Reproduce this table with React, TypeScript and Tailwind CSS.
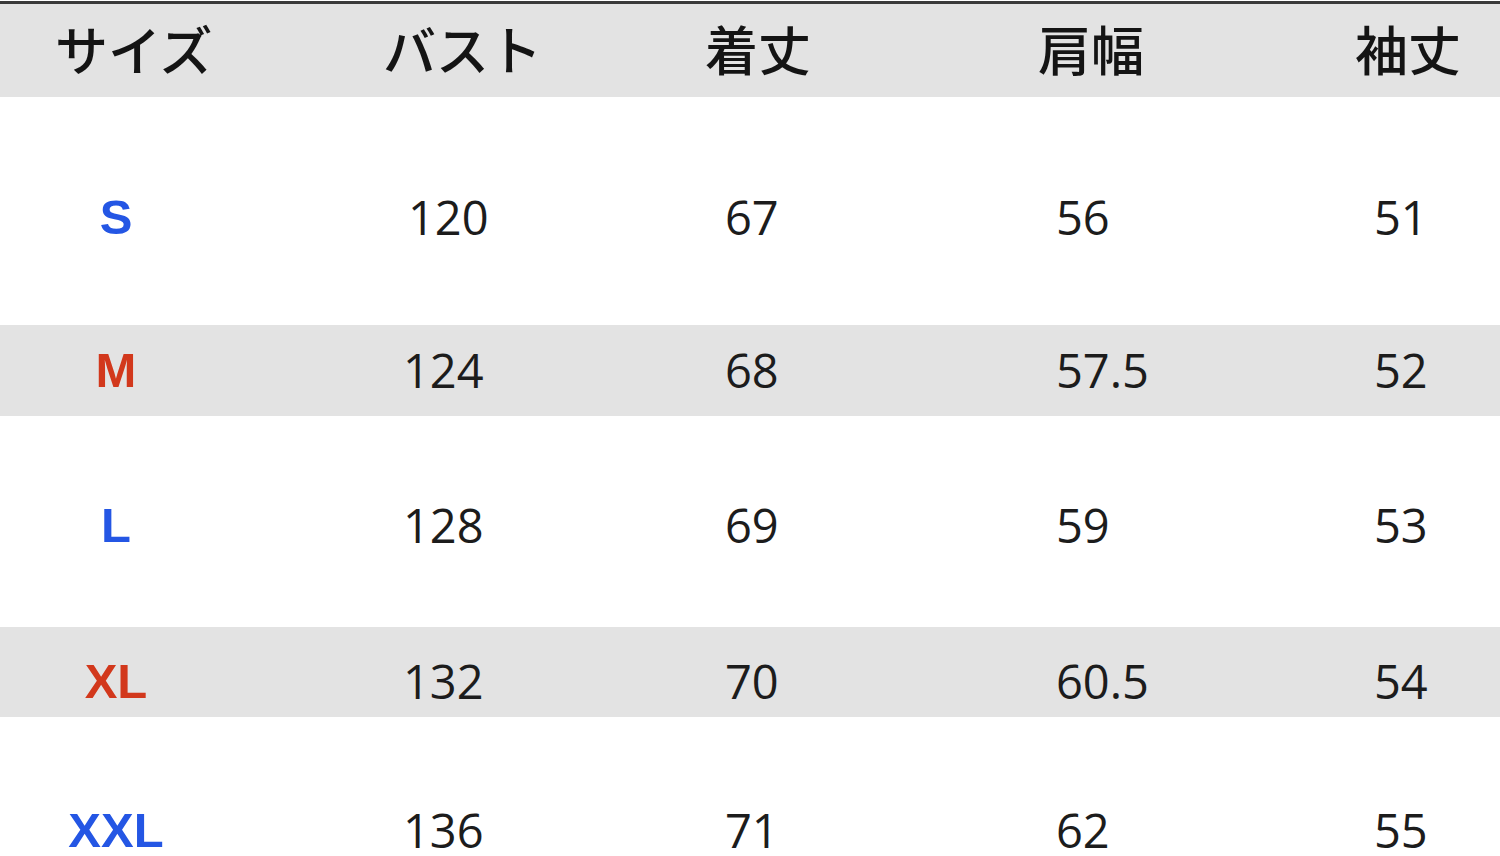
const HEADERS = ["サイズ", "バスト", "着丈", "肩幅", "袖丈"];

type Row = {
  size: string;
  color: string;
  values: string[];
  band: string;
};

const ROWS: Row[] = [
  { size: "S", color: "text-[#2456e4]", values: ["120", "67", "56", "51"], band: "h-[228px] pt-[12px] bg-white" },
  { size: "M", color: "text-[#d2381c]", values: ["124", "68", "57.5", "52"], band: "h-[91px] bg-[#e3e3e3]" },
  { size: "L", color: "text-[#2456e4]", values: ["128", "69", "59", "53"], band: "h-[211px] pt-[7px] bg-white" },
  { size: "XL", color: "text-[#d2381c]", values: ["132", "70", "60.5", "54"], band: "h-[90px] pt-[18px] bg-[#e3e3e3]" },
  { size: "XXL", color: "text-[#2456e4]", values: ["136", "71", "62", "55"], band: "h-[139px] pt-[88px] bg-white" },
];

export default function App() {
  return (
    <div className="h-[856px] w-[1500px] overflow-hidden bg-white">
      {/* header band with the dark rule on top */}
      <div className="mt-px border-t-[3px] border-[#3a3a3a] bg-[#e3e3e3]">
        <div
          className="grid h-[93px] grid-cols-[328px_322px_333px_317px_1fr] items-center pb-[4px] pl-[55px] text-[53px] font-medium leading-none text-[#141414]"
          style={{ fontFamily: '"Noto Sans CJK JP", sans-serif' }}
        >
          {HEADERS.map((h) => (
            <div key={h}>{h}</div>
          ))}
        </div>
      </div>

      {ROWS.map((row) => (
        <div
          key={row.size}
          className={`grid grid-cols-[403px_322px_331px_318px_1fr] items-center ${row.band}`}
        >
          <div
            className={`w-[232px] text-center text-[49px] font-bold leading-none ${row.color}`}
            style={{ fontFamily: '"Liberation Sans", Arial, sans-serif' }}
          >
            {row.size}
          </div>
          {row.values.map((v, i) => (
            <div
              key={i}
              className={`text-[47px] leading-none text-[#1c1c1c] ${row.size === "S" && i === 0 ? "pl-[5px]" : ""}`}
              style={{ fontFamily: '"Open Sans", sans-serif' }}
            >
              {v}
            </div>
          ))}
        </div>
      ))}
    </div>
  );
}
